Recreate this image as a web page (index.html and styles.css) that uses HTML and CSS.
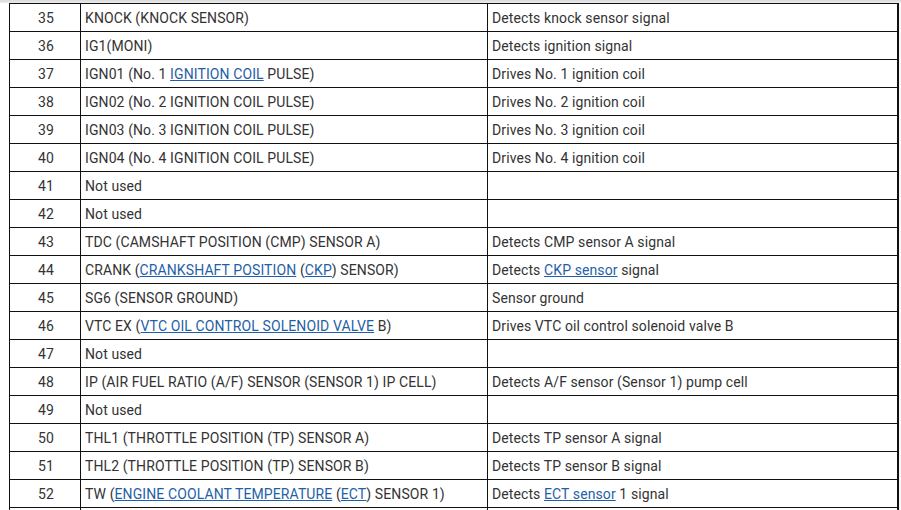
FILE: index.html
```html
<!DOCTYPE html>
<html>
<head>
<meta charset="utf-8">
<link rel="stylesheet" href="styles.css">
</head>
<body>
<div class="topbar"></div>
<div class="wrap">
<table class="pins">
<colgroup><col class="c1"><col class="c2"><col class="c3"></colgroup>
<tr><td class="num">35</td><td>KNOCK (KNOCK SENSOR)</td><td>Detects knock sensor signal</td></tr>
<tr><td class="num">36</td><td>IG1(MONI)</td><td>Detects ignition signal</td></tr>
<tr><td class="num">37</td><td>IGN01 (No. 1 <a href="#">IGNITION COIL</a> PULSE)</td><td>Drives No. 1 ignition coil</td></tr>
<tr><td class="num">38</td><td>IGN02 (No. 2 IGNITION COIL PULSE)</td><td>Drives No. 2 ignition coil</td></tr>
<tr><td class="num">39</td><td>IGN03 (No. 3 IGNITION COIL PULSE)</td><td>Drives No. 3 ignition coil</td></tr>
<tr><td class="num">40</td><td>IGN04 (No. 4 IGNITION COIL PULSE)</td><td>Drives No. 4 ignition coil</td></tr>
<tr><td class="num">41</td><td>Not used</td><td></td></tr>
<tr><td class="num">42</td><td>Not used</td><td></td></tr>
<tr><td class="num">43</td><td>TDC (CAMSHAFT POSITION (CMP) SENSOR A)</td><td>Detects CMP sensor A signal</td></tr>
<tr><td class="num">44</td><td>CRANK (<a href="#">CRANKSHAFT POSITION</a> (<a href="#">CKP</a>) SENSOR)</td><td>Detects <a href="#">CKP sensor</a> signal</td></tr>
<tr><td class="num">45</td><td>SG6 (SENSOR GROUND)</td><td>Sensor ground</td></tr>
<tr><td class="num">46</td><td>VTC EX (<a href="#">VTC OIL CONTROL SOLENOID VALVE</a> B)</td><td>Drives VTC oil control solenoid valve B</td></tr>
<tr><td class="num">47</td><td>Not used</td><td></td></tr>
<tr><td class="num">48</td><td>IP (AIR FUEL RATIO (A/F) SENSOR (SENSOR 1) IP CELL)</td><td>Detects A/F sensor (Sensor 1) pump cell</td></tr>
<tr><td class="num">49</td><td>Not used</td><td></td></tr>
<tr><td class="num">50</td><td>THL1 (THROTTLE POSITION (TP) SENSOR A)</td><td>Detects TP sensor A signal</td></tr>
<tr><td class="num">51</td><td>THL2 (THROTTLE POSITION (TP) SENSOR B)</td><td>Detects TP sensor B signal</td></tr>
<tr><td class="num">52</td><td>TW (<a href="#">ENGINE COOLANT TEMPERATURE</a> (<a href="#">ECT</a>) SENSOR 1)</td><td>Detects <a href="#">ECT sensor</a> 1 signal</td></tr>
<tr><td class="num"></td><td></td><td></td></tr>
</table>
</div>
</body>
</html>
```
FILE: styles.css
```css
html, body {
  margin: 0;
  padding: 0;
  background: #f7f7f7;
  height: 510px;
  overflow: hidden;
}
.topbar {
  height: 3px;
  background: linear-gradient(#d9d9d9, #ececec);
}
.wrap {
  padding-left: 9px;
  width: 888px;
  background: #ffffff;
}
.pins {
  border-collapse: collapse;
  table-layout: fixed;
  width: 888px;
  font-family: Roboto, "Liberation Sans", sans-serif;
  font-size: 14px;
  letter-spacing: 0.1px;
  color: #333333;
  background: #ffffff;
}
.c1 { width: 71px; }
.c2 { width: 407px; }
.c3 { width: 410px; }
.pins td {
  border: 1px solid #111111;
  height: 28px;
  padding: 0 0 0 4px;
  box-sizing: border-box;
  vertical-align: middle;
  white-space: nowrap;
  line-height: 16px;
}
.pins td.num {
  text-align: center;
  padding: 0 0 0 2px;
}
.pins tr td:last-child {
  border-right: 2px solid #111111;
}
.pins a {
  color: #1f5fa8;
  text-decoration: underline;
}
```
